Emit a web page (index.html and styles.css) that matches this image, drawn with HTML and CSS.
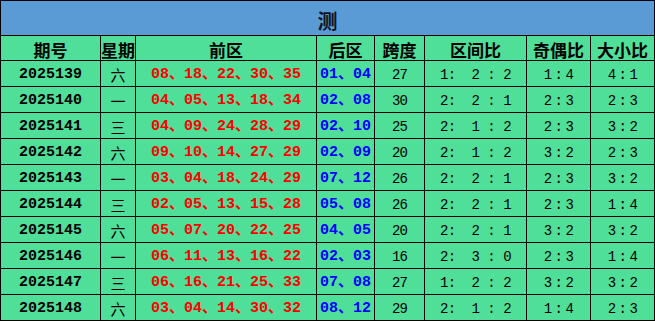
FILE: index.html
```html
<!DOCTYPE html>
<html lang="zh">
<head>
<meta charset="utf-8">
<title>测</title>
<link rel="stylesheet" href="styles.css">
</head>
<body>
<div class="grid">
  <div class="title">测</div>
  <div class="c h">期号</div><div class="c h">星期</div><div class="c h">前区</div><div class="c h">后区</div><div class="c h">跨度</div><div class="c h">区间比</div><div class="c h">奇偶比</div><div class="c h">大小比</div>

  <div class="c no">2025139</div><div class="c wk">六</div><div class="c red">08、18、22、30、35</div><div class="c blue">01、04</div><div class="c sp">27</div><div class="c r3">1:  2 : 2</div><div class="c r2">1:4</div><div class="c r2">4:1</div>
  <div class="c no">2025140</div><div class="c wk">一</div><div class="c red">04、05、13、18、34</div><div class="c blue">02、08</div><div class="c sp">30</div><div class="c r3">2:  2 : 1</div><div class="c r2">2:3</div><div class="c r2">2:3</div>
  <div class="c no">2025141</div><div class="c wk">三</div><div class="c red">04、09、24、28、29</div><div class="c blue">02、10</div><div class="c sp">25</div><div class="c r3">2:  1 : 2</div><div class="c r2">2:3</div><div class="c r2">3:2</div>
  <div class="c no">2025142</div><div class="c wk">六</div><div class="c red">09、10、14、27、29</div><div class="c blue">02、09</div><div class="c sp">20</div><div class="c r3">2:  1 : 2</div><div class="c r2">3:2</div><div class="c r2">2:3</div>
  <div class="c no">2025143</div><div class="c wk">一</div><div class="c red">03、04、18、24、29</div><div class="c blue">07、12</div><div class="c sp">26</div><div class="c r3">2:  2 : 1</div><div class="c r2">2:3</div><div class="c r2">3:2</div>
  <div class="c no">2025144</div><div class="c wk">三</div><div class="c red">02、05、13、15、28</div><div class="c blue">05、08</div><div class="c sp">26</div><div class="c r3">2:  2 : 1</div><div class="c r2">2:3</div><div class="c r2">1:4</div>
  <div class="c no">2025145</div><div class="c wk">六</div><div class="c red">05、07、20、22、25</div><div class="c blue">04、05</div><div class="c sp">20</div><div class="c r3">2:  2 : 1</div><div class="c r2">3:2</div><div class="c r2">3:2</div>
  <div class="c no">2025146</div><div class="c wk">一</div><div class="c red">06、11、13、16、22</div><div class="c blue">02、03</div><div class="c sp">16</div><div class="c r3">2:  3 : 0</div><div class="c r2">2:3</div><div class="c r2">1:4</div>
  <div class="c no">2025147</div><div class="c wk">三</div><div class="c red">06、16、21、25、33</div><div class="c blue">07、08</div><div class="c sp">27</div><div class="c r3">1:  2 : 2</div><div class="c r2">3:2</div><div class="c r2">3:2</div>
  <div class="c no">2025148</div><div class="c wk">六</div><div class="c red">03、04、14、30、32</div><div class="c blue">08、12</div><div class="c sp">29</div><div class="c r3">2:  1 : 2</div><div class="c r2">1:4</div><div class="c r2">2:3</div>
</div>
</body>
</html>
```

FILE: styles.css
```css
html, body {
  margin: 0;
  padding: 0;
  background: #ffffff;
}

.grid {
  display: grid;
  grid-template-columns: 99px 34px 180px 57px 49px 101px 63px 63px;
  grid-template-rows: 34px 24px repeat(10, 25px);
  gap: 1px;
  padding: 1px;
  width: 655px;
  height: 321px;
  box-sizing: border-box;
  background: #000000;
}

.title {
  grid-column: 1 / -1;
  background: #5b9bd5;
  color: #0d1420;
  font-family: "Noto Sans CJK SC", sans-serif;
  font-weight: bold;
  font-size: 20px;
  display: flex;
  align-items: center;
  justify-content: center;
  padding-top: 4px;
  box-sizing: border-box;
}

.c {
  background: #50df98;
  display: flex;
  align-items: center;
  justify-content: center;
  color: #000000;
  white-space: pre;
  padding-top: 2px;
  box-sizing: border-box;
  line-height: 1;
}

.h {
  font-family: "Noto Sans CJK SC", sans-serif;
  font-weight: bold;
  font-size: 17px;
  padding-top: 2px;
}

.no {
  font-family: "Liberation Mono", monospace;
  font-weight: bold;
  font-size: 15px;
}

.wk {
  font-family: "Noto Sans CJK SC", sans-serif;
  font-size: 15px;
  padding-top: 1px;
}

.red, .blue {
  font-family: "Liberation Mono", "Noto Sans CJK SC", monospace;
  font-weight: bold;
  font-size: 15px;
}

.red { color: #ff0000; }
.blue { color: #0000ff; }

.sp, .r3, .r2 {
  font-family: "Liberation Mono", monospace;
  font-size: 14px;
}

.sp {
  letter-spacing: -1px;
}

.r3 {
  letter-spacing: -0.5px;
}

.r2 {
  letter-spacing: 2.5px;
  padding-left: 3px;
}
```
